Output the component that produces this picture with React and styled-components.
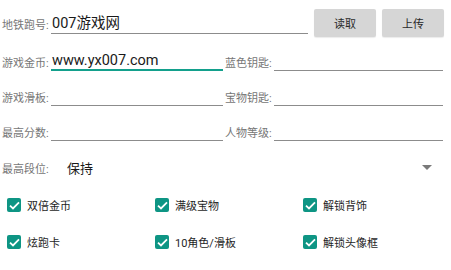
import React from 'react';
import styled, { createGlobalStyle } from 'styled-components';

const GlobalStyle = createGlobalStyle`
    body {
        margin: 0;
        background: #ffffff;
        font-family: Roboto, "Noto Sans CJK SC", sans-serif;
    }
`;

const Page = styled.div`
    width: 451px;
    height: 270px;
    overflow: hidden;
    background: #ffffff;
`;

const TopRow = styled.div`
    display: flex;
    align-items: center;
    height: 28px;
    margin-top: 9px;
    padding: 0 7px 0 2px;
`;

const FieldGrid = styled.div`
    display: grid;
    grid-template-columns: 223px 226px;
    row-gap: 14px;
    margin-top: 13px;
    padding-left: 2px;
`;

const Field = styled.div`
    display: flex;
    align-items: center;
    padding-right: ${(p) => p.$right || 0}px;
`;

const Label = styled.span`
    width: 49px;
    flex: none;
    font-size: 11px;
    color: #767676;
    white-space: nowrap;
    padding-top: 2px;
`;

const Input = styled.div`
    flex: 1;
    height: 21px;
    box-sizing: border-box;
    border-bottom: ${(p) => (p.$focused ? '2px solid #13a08c' : '1px solid #8c8c8c')};
    font-size: 14.5px;
    line-height: 22px;
    color: #1a1a1a;
    padding-left: 1px;
    white-space: nowrap;
`;

const Button = styled.button`
    width: 62px;
    height: 28px;
    margin-left: 6px;
    border: none;
    border-radius: 2px;
    background: #d6d6d6;
    box-shadow: 0 1px 1px rgba(0, 0, 0, 0.08);
    font-family: "Noto Sans CJK SC", sans-serif;
    font-size: 11px;
    color: #2a2a2a;
    padding: 0;
`;

const SpinnerRow = styled.div`
    display: flex;
    align-items: center;
    height: 22px;
    margin-top: 15px;
    padding: 0 19px 0 2px;
`;

const SpinnerValue = styled.span`
    flex: 1;
    padding-left: 16px;
    font-size: 13px;
    color: #1a1a1a;
`;

const Arrow = styled.span`
    width: 0;
    height: 0;
    border-left: 5px solid transparent;
    border-right: 5px solid transparent;
    border-top: 5px solid #7a7a7a;
`;

const CheckGrid = styled.div`
    display: grid;
    grid-template-columns: repeat(3, 148px);
    row-gap: 23px;
    margin-top: 20px;
    padding-left: 7px;
`;

const CheckItem = styled.label`
    display: flex;
    align-items: center;
    height: 14px;
    font-size: 11px;
    color: #1e1e1e;
    white-space: nowrap;
`;

const Box = styled.span`
    width: 14px;
    height: 14px;
    border-radius: 2px;
    background: #0e9584;
    margin-right: 6px;
    display: flex;
    align-items: center;
    justify-content: center;
    flex: none;
`;

const fields = [
    ['游戏金币:', 'www.yx007.com', true],
    ['蓝色钥匙:', ''],
    ['游戏滑板:', ''],
    ['宝物钥匙:', ''],
    ['最高分数:', ''],
    ['人物等级:', ''],
];

const checks = ['双倍金币', '满级宝物', '解锁背饰', '炫跑卡', '10角色/滑板', '解锁头像框'];

const Check = ({ text }) => (
    <CheckItem>
        <Box>
            <svg width="11" height="9" viewBox="0 0 11 9">
                <path d="M1 4.6 L4 7.4 L10 1.4" fill="none" stroke="#fff" strokeWidth="1.8" />
            </svg>
        </Box>
        {text}
    </CheckItem>
);

const App = () => (
    <Page>
        <GlobalStyle />
        <TopRow>
            <Label>地铁跑号:</Label>
            <Input>007游戏网</Input>
            <Button>读取</Button>
            <Button>上传</Button>
        </TopRow>
        <FieldGrid>
            {fields.map(([label, value, focused], i) => (
                <Field key={label} $right={i % 2 ? 8 : 2}>
                    <Label>{label}</Label>
                    <Input $focused={focused}>{value}</Input>
                </Field>
            ))}
        </FieldGrid>
        <SpinnerRow>
            <Label>最高段位:</Label>
            <SpinnerValue>保持</SpinnerValue>
            <Arrow />
        </SpinnerRow>
        <CheckGrid>
            {checks.map((c) => (
                <Check key={c} text={c} />
            ))}
        </CheckGrid>
    </Page>
);

export default App;
